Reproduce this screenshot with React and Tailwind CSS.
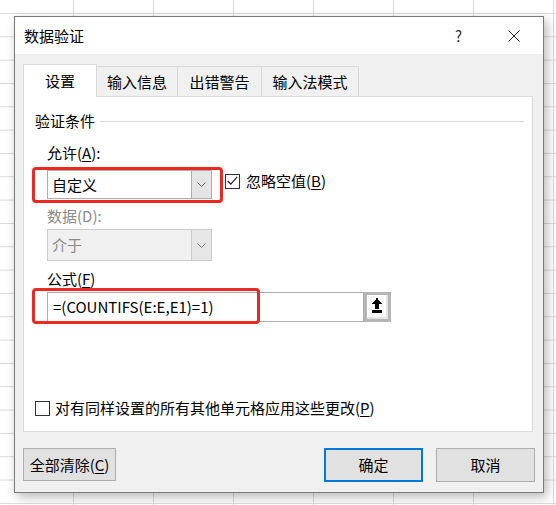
import React from "react";

function Chevron({ color = "#606060" }) {
  return (
    <svg width="9" height="5" viewBox="0 0 9 5" fill="none">
      <path d="M0.5 0.5 L4.5 4.5 L8.5 0.5" stroke={color} strokeWidth="1" />
    </svg>
  );
}

function Check({ checked }) {
  return (
    <div className="w-[15px] h-[15px] border border-[#333333] bg-white flex items-center justify-center shrink-0">
      {checked && (
        <svg width="11" height="10" viewBox="0 0 11 10" fill="none">
          <path d="M0.8 5 L3.8 8.2 L10.2 0.8" stroke="#222" strokeWidth="1.2" />
        </svg>
      )}
    </div>
  );
}

export default function App() {
  return (
    <div className="relative w-[556px] h-[505px] overflow-hidden bg-white bg-[linear-gradient(to_right,#d9d9d9_1px,transparent_1px),linear-gradient(to_bottom,#d9d9d9_1px,transparent_1px)] bg-[length:80px_23.33px] bg-[position:73px_13px] font-['Noto_Sans_CJK_SC','Noto_Sans',sans-serif] text-black">
      {/* Dialog */}
      <div className="absolute left-[14px] top-[16px] w-[530px] h-[477px] border border-[#7a7a7a] flex flex-col shadow-[3px_4px_10px_rgba(0,0,0,0.28)]">
        {/* Title bar */}
        <div className="h-[37px] bg-white flex items-center pl-[9px] pr-[23px]">
          <span className="text-[15px] leading-[20px]">数据验证</span>
          <span className="ml-auto text-[15px] leading-[20px] text-[#333]">?</span>
          <svg className="ml-[46px]" width="12" height="12" viewBox="0 0 12 12" fill="none">
            <path d="M0.5 0.5 L11.5 11.5 M11.5 0.5 L0.5 11.5" stroke="#222" strokeWidth="1" />
          </svg>
        </div>
        {/* Body */}
        <div className="flex-1 bg-[#f0f0f0] px-[8px] pt-[10px] flex flex-col">
          {/* Tabs */}
          <div className="flex items-start h-[32px] text-[15px] leading-[20px]">
            <div className="relative z-10 w-[74px] h-[33px] bg-white border border-b-0 border-[#d9d9d9] flex items-center justify-center">
              设置
            </div>
            <div className="mt-[2px] w-[81px] h-[30px] border-t border-r border-[#d9d9d9] flex items-center justify-center">
              输入信息
            </div>
            <div className="mt-[2px] w-[84px] h-[30px] border-t border-r border-[#d9d9d9] flex items-center justify-center">
              出错警告
            </div>
            <div className="mt-[2px] w-[97px] h-[30px] border-t border-r border-[#d9d9d9] flex items-center justify-center">
              输入法模式
            </div>
          </div>
          {/* Panel */}
          <div className="w-[510px] h-[336px] bg-white border border-[#d9d9d9] pl-[11px] flex flex-col text-[15px] leading-[20px]">
            <div className="mt-[14px] h-[20px] flex items-center">
              <span>验证条件</span>
              <div className="flex-1 h-px bg-[#dcdcdc] ml-[5px] mr-[8px]" />
            </div>
            <div className="ml-[12px] flex flex-col">
              <div className="mt-[12px] h-[20px]">
                允许(<span className="underline underline-offset-2">A</span>):
              </div>
              <div className="mt-[7px] flex items-start">
                <div className="w-[165px] h-[29px] border border-[#adadad] bg-white flex">
                  <div className="flex-1 pl-[4px] flex items-center">自定义</div>
                  <div className="w-[20px] bg-[#e5e5e5] border-l border-[#adadad] flex items-center justify-center">
                    <Chevron />
                  </div>
                </div>
                <div className="ml-[13px] mt-[1px] flex items-center">
                  <Check checked />
                  <span className="ml-[6px]">
                    忽略空值(<span className="underline underline-offset-2">B</span>)
                  </span>
                </div>
              </div>
              <div className="mt-[7px] h-[20px] text-[#8a8a8a]">数据(D):</div>
              <div className="mt-[3px] w-[165px] h-[32px] border border-[#cccccc] bg-[#f0f0f0] flex text-[#8a8a8a]">
                <div className="flex-1 pl-[4px] flex items-center">介于</div>
                <div className="w-[20px] bg-[#e6e6e6] border-l border-[#cccccc] flex items-center justify-center">
                  <Chevron color="#7a7a7a" />
                </div>
              </div>
              <div className="mt-[8px] h-[20px]">
                公式(<span className="underline underline-offset-2">F</span>)
              </div>
              <div className="mt-[3px] flex">
                <div className="w-[317px] h-[30px] border border-[#adadad] bg-white pl-[5px] flex items-center">
                  =(COUNTIFS(E:E,E1)=1)
                </div>
                <div className="w-[27px] h-[30px] border-[3px] border-[#b5b5b5] bg-[#e3e3e3] flex">
                  <div className="flex-1 bg-white mr-[2px] mb-[2px] flex items-center justify-center">
                    <svg width="10" height="16" viewBox="0 0 10 16" shapeRendering="crispEdges">
                      <path d="M4 0 H6 V2 H7 V3 H8 V4 H9 V5 H10 V6 H7 V11 H3 V6 H0 V5 H1 V4 H2 V3 H3 V2 H4 Z" fill="#000" />
                      <rect x="0" y="12" width="10" height="3" fill="#000" />
                    </svg>
                  </div>
                </div>
              </div>
            </div>
            <div className="mt-[76px] h-[20px] flex items-center">
              <Check />
              <span className="ml-[5px]">
                对有同样设置的所有其他单元格应用这些更改(<span className="underline underline-offset-2">P</span>)
              </span>
            </div>
          </div>
          {/* Buttons */}
          <div className="mt-[16px] flex text-[15px] leading-[20px]">
            <div className="w-[93px] h-[33px] bg-[#e1e1e1] border border-[#adadad] flex items-center justify-center">
              全部清除(<span className="underline underline-offset-2">C</span>)
            </div>
            <div className="ml-auto w-[99px] h-[34px] bg-[#e1e1e1] border-2 border-[#0078d7] flex items-center justify-center">
              确定
            </div>
            <div className="ml-[13px] w-[99px] h-[34px] bg-[#e1e1e1] border border-[#adadad] flex items-center justify-center">
              取消
            </div>
          </div>
        </div>
      </div>
      {/* Red highlight boxes */}
      <div className="absolute left-[32px] top-[167px] w-[191px] h-[36px] border-[3px] border-[#ea2a22] rounded-[4px]" />
      <div className="absolute left-[32px] top-[288px] w-[228px] h-[36px] border-[3px] border-[#ea2a22] rounded-[4px]" />
    </div>
  );
}
